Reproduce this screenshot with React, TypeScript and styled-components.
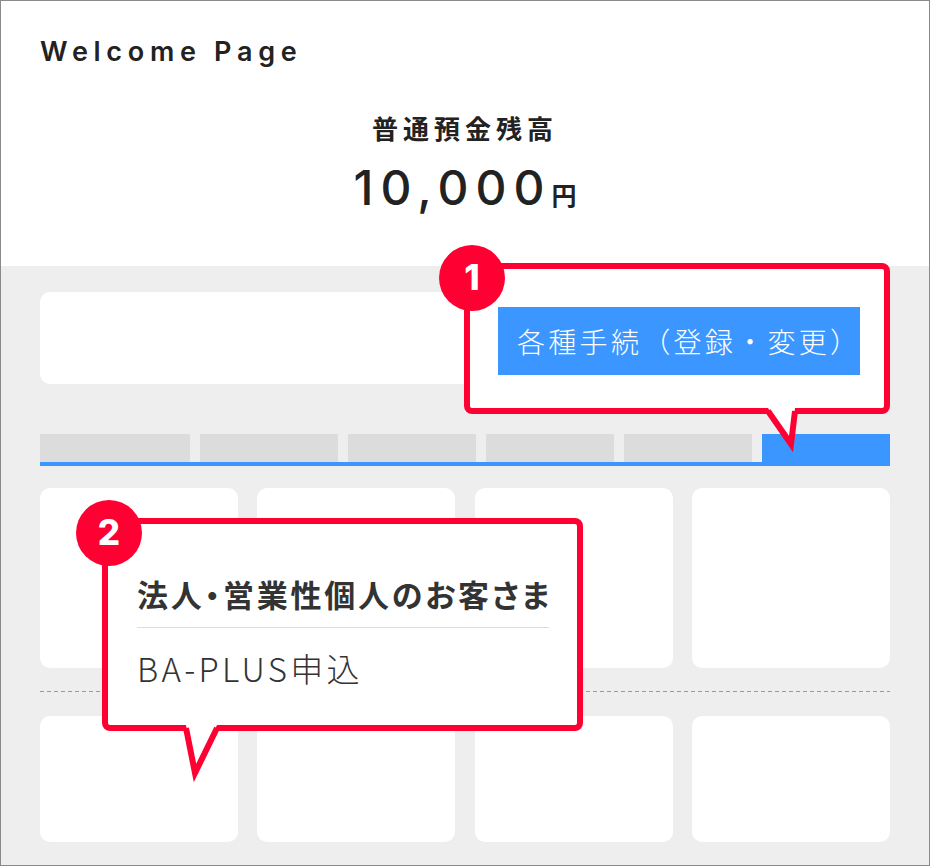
import React from "react";
import styled, { createGlobalStyle } from "styled-components";

const GlobalStyle = createGlobalStyle`
  html, body { margin: 0; padding: 0; background: #ffffff; }
  body { font-family: "Liberation Sans", "Noto Sans CJK JP", sans-serif; color: #222; }
  * { box-sizing: border-box; }
`;

const RED = "#ff0033";
const BLUE = "#3b96ff";
const JP = `"Noto Sans CJK JP", "Noto Sans", sans-serif`;
const LATIN = `"Inter", "Liberation Sans", "Noto Sans CJK JP", sans-serif`;

const Frame = styled.div`
  position: relative;
  width: 930px;
  height: 866px;
  border: 1px solid #8a8a8a;
  background: #eeeeee;
  overflow: hidden;
`;

const Header = styled.header`
  height: 265px;
  background: #ffffff;
  padding: 36px 39px 0;
  display: flex;
  flex-direction: column;
`;

const Title = styled.h1`
  margin: 0;
  font-family: ${LATIN};
  font-size: 27px;
  line-height: 30px;
  font-weight: 600;
  letter-spacing: 5.7px;
  color: #222;
`;

const BalanceLabel = styled.div`
  margin-top: 46px;
  text-align: center;
  font-family: ${JP};
  font-size: 26px;
  line-height: 30px;
  font-weight: 700;
  letter-spacing: 5px;
  color: #222;
`;

const Amount = styled.div`
  margin-top: 20px;
  text-align: center;
  font-family: ${LATIN};
  font-size: 48px;
  line-height: 50px;
  font-weight: 500;
  letter-spacing: 7px;
  color: #222;
`;

const Yen = styled.span`
  font-family: ${JP};
  font-size: 25px;
  font-weight: 700;
  letter-spacing: 0;
  margin-left: 0;
`;

const Main = styled.main`
  padding: 26px 39px 23px;
  display: flex;
  flex-direction: column;
`;

const InfoBox = styled.div`
  height: 92px;
  background: #ffffff;
  border-radius: 10px;
`;

const Tabs = styled.div`
  margin-top: 50px;
  display: flex;
  gap: 10px;
  height: 32px;
  border-bottom: 4px solid ${BLUE};
`;

const Tab = styled.div<{ $w: number; $active?: boolean }>`
  width: ${(p) => p.$w}px;
  height: 28px;
  background: ${(p) => (p.$active ? BLUE : "#dcdcdc")};
`;

const CardRow = styled.div<{ $h: number }>`
  display: flex;
  justify-content: space-between;
  height: ${(p) => p.$h}px;
`;

const Card = styled.div`
  width: 198px;
  height: 100%;
  background: #ffffff;
  border-radius: 10px;
`;

const FirstRow = styled(CardRow)`
  margin-top: 22px;
`;

const Divider = styled.div`
  margin: 23px 0 24px;
  height: 1px;
  background: repeating-linear-gradient(to right, #999 0 4px, transparent 4px 7px);
`;

const Callout = styled.div<{ $x: number; $y: number; $w: number; $h: number }>`
  position: absolute;
  left: ${(p) => p.$x}px;
  top: ${(p) => p.$y}px;
  width: ${(p) => p.$w}px;
  height: ${(p) => p.$h}px;
`;

const Bubble = styled.div<{ $pad: string }>`
  width: 100%;
  height: 100%;
  border: 6px solid ${RED};
  border-radius: 8px;
  background: #ffffff;
  padding: ${(p) => p.$pad};
`;

const Badge = styled.div<{ $x: number; $y: number }>`
  position: absolute;
  left: ${(p) => p.$x}px;
  top: ${(p) => p.$y}px;
  width: 66px;
  height: 66px;
  border-radius: 50%;
  background: ${RED};
  color: #ffffff;
  display: flex;
  align-items: center;
  justify-content: center;
  font-family: ${LATIN};
  font-weight: 800;
  font-size: 35px;
  line-height: 1;
  padding-bottom: 1px;
`;

const Tail = styled.svg<{ $x: number; $y: number }>`
  position: absolute;
  left: ${(p) => p.$x}px;
  top: ${(p) => p.$y}px;
  overflow: visible;
`;

const ActionButton = styled.div`
  width: 362px;
  height: 68px;
  background: ${BLUE};
  color: #ffffff;
  display: flex;
  align-items: center;
  justify-content: flex-start;
  padding-left: 19px;
  font-family: ${JP};
  font-size: 28px;
  letter-spacing: 3.3px;
  font-weight: 300;
  white-space: nowrap;
`;

const CalloutHeading = styled.div`
  font-family: ${JP};
  font-size: 31px;
  line-height: 40px;
  font-weight: 700;
  letter-spacing: 2.8px;
  font-feature-settings: "palt";
  color: #333;
  white-space: nowrap;
`;

const CalloutRule = styled.div`
  height: 1px;
  background: #dddddd;
  margin: 13px 0 0;
`;

const CalloutText = styled.div`
  margin-top: 20px;
  font-family: ${JP};
  font-size: 33px;
  line-height: 40px;
  font-weight: 300;
  letter-spacing: 3.3px;
  color: #333;
  white-space: nowrap;
`;

function TailShape({ x, y, left, tip, right }: { x: number; y: number; left: number; tip: [number, number]; right: number }) {
  return (
    <Tail $x={x} $y={y} width={50} height={50} viewBox="0 0 50 50">
      <polygon points={`${left},0 ${right},0 ${tip[0]},${tip[1]}`} fill="#ffffff" />
      <polyline
        points={`${left},3 ${tip[0]},${tip[1]} ${right},3`}
        fill="none"
        stroke={RED}
        strokeWidth={6}
        strokeLinejoin="miter"
        strokeMiterlimit={6}
      />
    </Tail>
  );
}

export default function App() {
  const tabs = [150, 138, 128, 128, 128, 128];
  return (
    <>
      <GlobalStyle />
      <Frame>
        <Header>
          <Title>Welcome Page</Title>
          <BalanceLabel>普通預金残高</BalanceLabel>
          <Amount>
            10,000<Yen>円</Yen>
          </Amount>
        </Header>
        <Main>
          <InfoBox />
          <Tabs>
            {tabs.map((w, i) => (
              <Tab key={i} $w={w} $active={i === tabs.length - 1} />
            ))}
          </Tabs>
          <FirstRow $h={180}>
            <Card />
            <Card />
            <Card />
            <Card />
          </FirstRow>
          <Divider />
          <CardRow $h={126}>
            <Card />
            <Card />
            <Card />
            <Card />
          </CardRow>
        </Main>

        <Callout $x={463} $y={262} $w={426} $h={151}>
          <Bubble $pad="38px 24px 33px 28px">
            <ActionButton>各種手続（登録・変更）</ActionButton>
          </Bubble>
          <TailShape x={291} y={145} left={13} tip={[36, 36]} right={40} />
          <Badge $x={-25} $y={-18}>1</Badge>
        </Callout>

        <Callout $x={101} $y={517} $w={481} $h={213}>
          <Bubble $pad="50px 28px 0 29px">
            <CalloutHeading>法人・営業性個人のお客さま</CalloutHeading>
            <CalloutRule />
            <CalloutText>BA-PLUS申込</CalloutText>
          </Bubble>
          <TailShape x={73} y={207} left={11} tip={[20, 48]} right={42} />
          <Badge $x={-26} $y={-18}>2</Badge>
        </Callout>
      </Frame>
    </>
  );
}
